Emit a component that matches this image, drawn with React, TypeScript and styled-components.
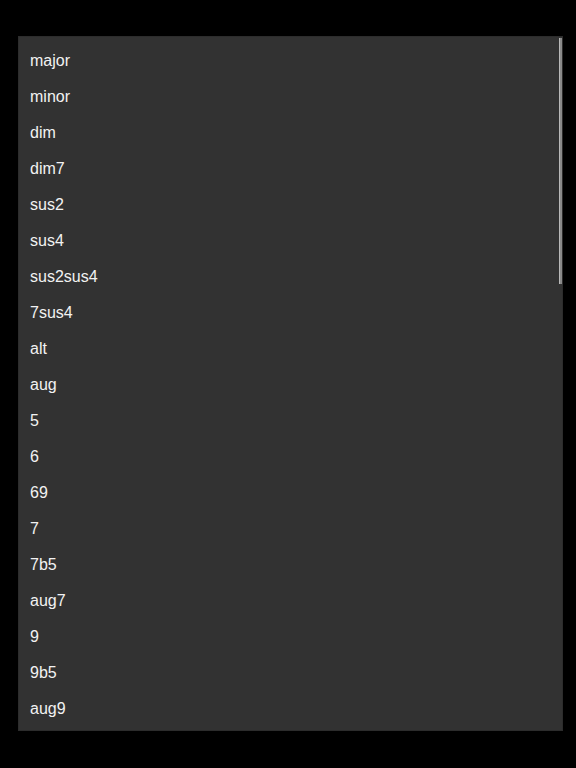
import React from "react";
import styled, { createGlobalStyle } from "styled-components";

const GlobalStyle = createGlobalStyle`
  html, body {
    margin: 0;
    padding: 0;
    background: #000000;
  }
  body {
    font-family: "Liberation Sans", Arial, sans-serif;
  }
`;

const Page = styled.div`
  display: flex;
  padding: 36px 0 0 18px;
  height: 768px;
  box-sizing: border-box;
`;

const Panel = styled.div`
  position: relative;
  width: 545px;
  height: 695px;
  background: #323232;
  box-shadow: inset 0 0 0 1px #2c2c2c;
  overflow: hidden;
  box-sizing: border-box;
`;

const List = styled.ul`
  list-style: none;
  margin: 0;
  padding: 7px 0 0;
`;

const Item = styled.li`
  height: 36px;
  display: flex;
  align-items: center;
  padding-left: 12px;
  font-size: 16px;
  color: #f2f2f2;
`;

const ScrollThumb = styled.div`
  position: absolute;
  top: 2px;
  right: 1px;
  width: 3px;
  height: 246px;
  background: #8a8a8a;
  box-shadow: inset 1px 0 0 #b8b8b8;
`;

const chords = [
  "major", "minor", "dim", "dim7", "sus2", "sus4", "sus2sus4", "7sus4", "alt", "aug",
  "5", "6", "69", "7", "7b5", "aug7", "9", "9b5", "aug9",
];

export default function App() {
  return (
    <>
      <GlobalStyle />
      <Page>
        <Panel>
          <List>
            {chords.map((c) => (
              <Item key={c}>{c}</Item>
            ))}
          </List>
          <ScrollThumb />
        </Panel>
      </Page>
    </>
  );
}
